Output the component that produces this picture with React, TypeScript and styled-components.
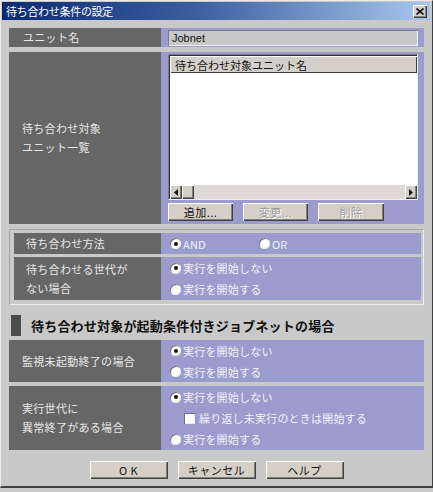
import React from 'react';
import styled, { createGlobalStyle } from 'styled-components';

const GlobalStyle = createGlobalStyle`
  html, body {
    margin: 0;
    padding: 0;
    background: #cacaca;
  }
  * {
    box-sizing: border-box;
  }
`;

const JP = `"Noto Sans CJK JP", "Liberation Sans", sans-serif`;

const LAVENDER = '#9b9bcd';
const LABEL_BG = '#666666';

const Window = styled.div`
  width: 433px;
  height: 488px;
  background: #c9c9c9;
  border-top: 1px solid #ececec;
  border-left: 1px solid #ececec;
  border-right: 1px solid #404040;
  border-bottom: 2px solid #404040;
  padding: 1px 2px 0 1px;
  font-family: ${JP};
  font-size: 11px;
  display: flex;
  flex-direction: column;
`;

const TitleBar = styled.div`
  height: 18px;
  background: linear-gradient(90deg, #0c2a72 0%, #3a5ea0 45%, #a8c8ee 100%);
  display: flex;
  align-items: center;
  justify-content: space-between;
  padding: 0 3px 0 4px;
`;

const TitleText = styled.span`
  color: #ffffff;
  font-size: 11px;
  letter-spacing: -0.3px;
`;

const CloseButton = styled.div`
  width: 14px;
  height: 13px;
  background: #d4d0c8;
  box-shadow: inset 1px 1px 0 #ffffff, inset -1px -1px 0 #404040, inset -2px -2px 0 #808080;
  display: flex;
  align-items: center;
  justify-content: center;
`;

const Content = styled.div`
  flex: 1;
  display: flex;
  flex-direction: column;
  padding: 0 6px 0 7px;
`;

const Row = styled.div<{ $h: number; $mt: number; $label?: number }>`
  display: grid;
  grid-template-columns: ${({ $label }) => $label ?? 152}px 1fr;
  height: ${({ $h }) => $h}px;
  margin-top: ${({ $mt }) => $mt}px;
`;

const LabelCell = styled.div<{ $pad?: number }>`
  background: ${LABEL_BG};
  color: #e8e8e8;
  font-size: 11px;
  line-height: 19px;
  display: flex;
  flex-direction: column;
  justify-content: center;
  padding-left: ${({ $pad }) => $pad ?? 13}px;
  letter-spacing: 0.3px;
`;

const FieldCell = styled.div`
  background: ${LAVENDER};
  display: flex;
  align-items: center;
  padding: 1px 6px 0 7px;
`;

const TextField = styled.div`
  width: 100%;
  height: 16px;
  background: #c8c8c8;
  box-shadow: inset 1px 1px 0 #808080, inset -1px -1px 0 #f4f4f4;
  font-family: "Liberation Sans", sans-serif;
  font-size: 11px;
  color: #111;
  display: flex;
  align-items: center;
  padding-left: 4px;
`;

const ListCell = styled.div`
  background: ${LAVENDER};
  display: flex;
  flex-direction: column;
  padding: 2px 6px 3px 7px;
`;

const ListBox = styled.div`
  height: 146px;
  display: flex;
  flex-direction: column;
  border: 1px solid #808080;
  border-right-color: #f0f0f0;
  border-bottom-color: #f0f0f0;
  box-shadow: inset 1px 1px 0 #303030;
  background: #ffffff;
  padding: 1px 0 0 1px;
`;

const ListHeader = styled.div`
  height: 17px;
  background: #d4d0c8;
  box-shadow: inset 1px 1px 0 #ffffff, inset -1px -1px 0 #404040;
  color: #111;
  font-size: 11px;
  display: flex;
  align-items: center;
  padding-left: 5px;
`;

const ListBody = styled.div`
  flex: 1;
  background: #ffffff;
`;

const ScrollBar = styled.div`
  height: 14px;
  display: flex;
  background: #dedad3;
`;

const ScrollButton = styled.div<{ $w: number }>`
  width: ${({ $w }) => $w}px;
  height: 14px;
  background: #d4d0c8;
  box-shadow: inset 1px 1px 0 #ffffff, inset -1px -1px 0 #404040, inset -2px -2px 0 #808080;
  display: flex;
  align-items: center;
  justify-content: center;
`;

const ScrollTrack = styled.div`
  flex: 1;
`;

const SmallButtons = styled.div`
  display: flex;
  gap: 10px;
  margin-top: 3px;
`;

const Button = styled.button<{ $w: number; $disabled?: boolean }>`
  width: ${({ $w }) => $w}px;
  height: 18px;
  margin: 0;
  padding: 0;
  border: none;
  background: #d4d0c8;
  box-shadow: inset 1px 1px 0 #ffffff, inset -1px -1px 0 #404040, inset -2px -2px 0 #808080;
  font-family: ${JP};
  font-size: 11px;
  color: ${({ $disabled }) => ($disabled ? '#9a9a9a' : '#111111')};
  text-shadow: ${({ $disabled }) => ($disabled ? '1px 1px 0 #ffffff' : 'none')};
  letter-spacing: 0.5px;
  display: flex;
  align-items: center;
  justify-content: center;
`;

const Group = styled.div`
  margin-top: 5px;
  border: 1px solid #a8a8a8;
  border-right-color: #ececec;
  border-bottom-color: #ececec;
  padding: 3px 2px 4px 4px;
  display: flex;
  flex-direction: column;
  gap: 3px;
`;

const OptionCell = styled.div<{ $row?: boolean }>`
  background: ${LAVENDER};
  display: flex;
  flex-direction: ${({ $row }) => ($row ? 'row' : 'column')};
  justify-content: ${({ $row }) => ($row ? 'flex-start' : 'center')};
  padding-left: 9px;
`;

const OptionLine = styled.div<{ $w?: number; $indent?: number }>`
  height: 21px;
  width: ${({ $w }) => ($w ? `${$w}px` : 'auto')};
  display: flex;
  align-items: center;
  gap: 2px;
  padding-left: ${({ $indent }) => $indent ?? 0}px;
  color: #f2f2fa;
  font-size: 11px;
  letter-spacing: 0.2px;
`;

const Radio = styled.span<{ $on?: boolean }>`
  width: 11px;
  height: 11px;
  border-radius: 50%;
  background: #ffffff;
  box-shadow: inset 1px 1px 0 #707070, inset -1px -1px 0 #e8e8e8;
  display: flex;
  align-items: center;
  justify-content: center;
  flex-shrink: 0;

  &::after {
    content: '';
    width: 4px;
    height: 4px;
    border-radius: 50%;
    background: ${({ $on }) => ($on ? '#111111' : 'transparent')};
  }
`;

const Checkbox = styled.span`
  width: 11px;
  height: 11px;
  background: #ffffff;
  box-shadow: inset 1px 1px 0 #707070, inset -1px -1px 0 #e8e8e8;
  flex-shrink: 0;
  margin-right: 2px;
`;

const Heading = styled.div`
  margin-top: 10px;
  height: 21px;
  display: flex;
  align-items: center;
  gap: 10px;
  padding-left: 2px;
`;

const HeadingMarker = styled.span`
  width: 10px;
  height: 21px;
  background: #4e4e4e;
`;

const HeadingText = styled.span`
  font-size: 13px;
  font-weight: bold;
  color: #111111;
  letter-spacing: 0.2px;
`;

const Footer = styled.div`
  margin-top: 11px;
  display: flex;
  justify-content: center;
  gap: 10px;
`;

const Arrow = ({ dir }: { dir: 'left' | 'right' }) => (
  <svg width="4" height="7" viewBox="0 0 4 7">
    {dir === 'left' ? <path d="M4 0 L0 3.5 L4 7 Z" fill="#111" /> : <path d="M0 0 L4 3.5 L0 7 Z" fill="#111" />}
  </svg>
);

const Option = ({ on, children }: { on?: boolean; children: React.ReactNode }) => (
  <OptionLine>
    <Radio $on={on} />
    <span>{children}</span>
  </OptionLine>
);

export default function App() {
  return (
    <>
      <GlobalStyle />
      <Window>
        <TitleBar>
          <TitleText>待ち合わせ条件の設定</TitleText>
          <CloseButton>
            <svg width="8" height="7" viewBox="0 0 8 7">
              <path d="M0.5 0.5 L7.5 6.5 M7.5 0.5 L0.5 6.5" stroke="#111" strokeWidth="1.6" />
            </svg>
          </CloseButton>
        </TitleBar>

        <Content>
          <Row $h={19} $mt={8}>
            <LabelCell $pad={14}>ユニット名</LabelCell>
            <FieldCell>
              <TextField>Jobnet</TextField>
            </FieldCell>
          </Row>

          <Row $h={172} $mt={5}>
            <LabelCell>
              <span>待ち合わせ対象</span>
              <span>ユニット一覧</span>
            </LabelCell>
            <ListCell>
              <ListBox>
                <ListHeader>待ち合わせ対象ユニット名</ListHeader>
                <ListBody />
                <ScrollBar>
                  <ScrollButton $w={12}>
                    <Arrow dir="left" />
                  </ScrollButton>
                  <ScrollButton $w={12} />
                  <ScrollTrack />
                  <ScrollButton $w={12}>
                    <Arrow dir="right" />
                  </ScrollButton>
                </ScrollBar>
              </ListBox>
              <SmallButtons>
                <Button $w={65}>追加...</Button>
                <Button $w={65} $disabled>変更...</Button>
                <Button $w={66} $disabled>削除</Button>
              </SmallButtons>
            </ListCell>
          </Row>

          <Group>
            <Row $h={21} $mt={0} $label={147}>
              <LabelCell $pad={12}>待ち合わせ方法</LabelCell>
              <OptionCell $row>
                <OptionLine $w={89}>
                  <Radio $on />
                  <span>AND</span>
                </OptionLine>
                <OptionLine>
                  <Radio />
                  <span>OR</span>
                </OptionLine>
              </OptionCell>
            </Row>
            <Row $h={43} $mt={0} $label={147}>
              <LabelCell $pad={12}>
                <span>待ち合わせる世代が</span>
                <span>ない場合</span>
              </LabelCell>
              <OptionCell>
                <Option on>実行を開始しない</Option>
                <Option>実行を開始する</Option>
              </OptionCell>
            </Row>
          </Group>

          <Heading>
            <HeadingMarker />
            <HeadingText>待ち合わせ対象が起動条件付きジョブネットの場合</HeadingText>
          </Heading>

          <Row $h={42} $mt={4}>
            <LabelCell>監視未起動終了の場合</LabelCell>
            <OptionCell>
              <Option on>実行を開始しない</Option>
              <Option>実行を開始する</Option>
            </OptionCell>
          </Row>

          <Row $h={64} $mt={4}>
            <LabelCell>
              <span>実行世代に</span>
              <span>異常終了がある場合</span>
            </LabelCell>
            <OptionCell>
              <Option on>実行を開始しない</Option>
              <OptionLine $indent={14}>
                <Checkbox />
                <span>繰り返し未実行のときは開始する</span>
              </OptionLine>
              <Option>実行を開始する</Option>
            </OptionCell>
          </Row>

          <Footer>
            <Button $w={78}>O K</Button>
            <Button $w={78}>キャンセル</Button>
            <Button $w={78}>ヘルプ</Button>
          </Footer>
        </Content>
      </Window>
    </>
  );
}
